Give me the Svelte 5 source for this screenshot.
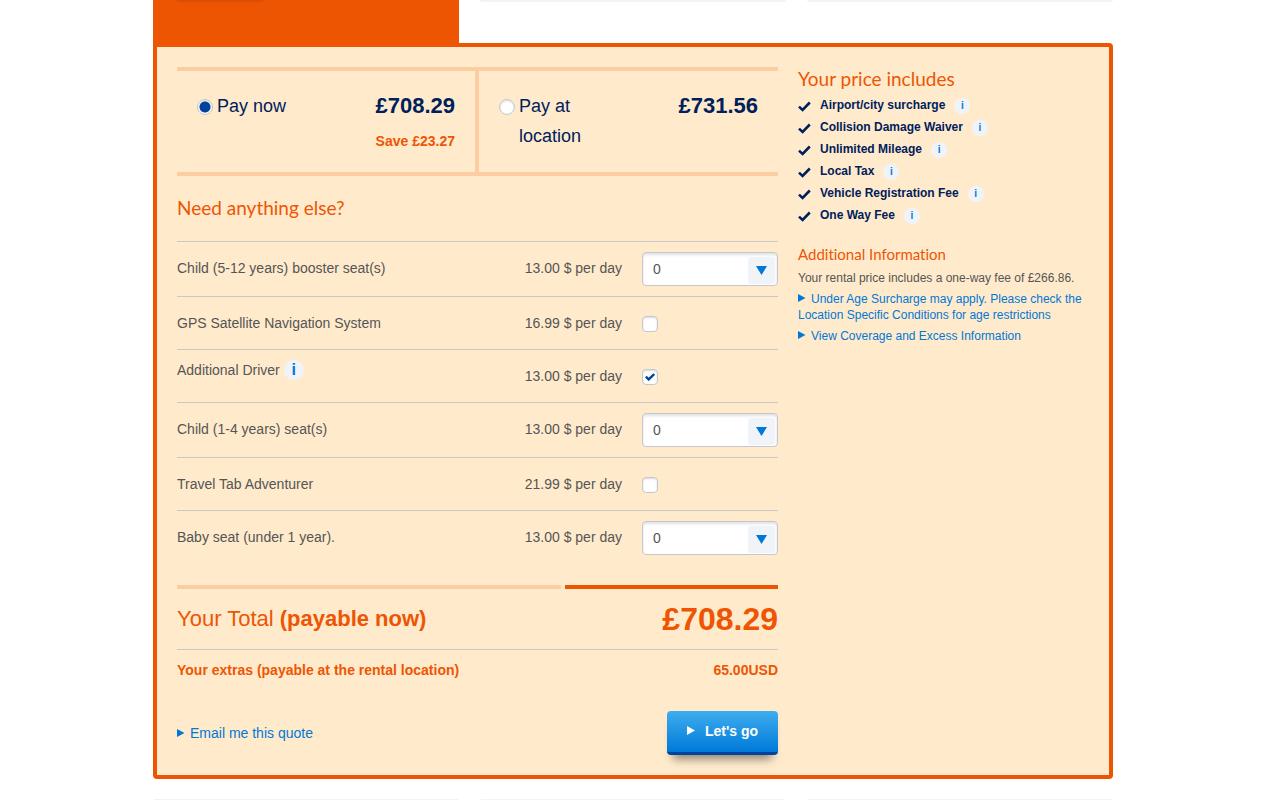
<script lang="ts">
  let payment = "now";

  let extras = [
    { id: "booster", name: "Child (5-12 years) booster seat(s)", price: "13.00", type: "count", value: 0, info: false },
    { id: "gps", name: "GPS Satellite Navigation System", price: "16.99", type: "check", value: false, info: false },
    { id: "driver", name: "Additional Driver", price: "13.00", type: "check", value: true, info: true },
    { id: "child", name: "Child (1-4 years) seat(s)", price: "13.00", type: "count", value: 0, info: false },
    { id: "tab", name: "Travel Tab Adventurer", price: "21.99", type: "check", value: false, info: false },
    { id: "baby", name: "Baby seat (under 1 year).", price: "13.00", type: "count", value: 0, info: false }
  ];

  const included = [
    "Airport/city surcharge",
    "Collision Damage Waiver",
    "Unlimited Mileage",
    "Local Tax",
    "Vehicle Registration Fee",
    "One Way Fee"
  ];
</script>

<div class="page">
  <div class="cars top">
    <div class="tab"><div class="tab-button"></div></div>
    <div class="card-end"></div>
    <div class="card-end"></div>
  </div>

  <main class="panel">
    <section class="booking">
      <div class="payments">
        <div class="payment">
          <label><input type="radio" name="payment" value="now" bind:group={payment}><span>Pay now</span></label>
          <div class="amount">
            <strong>£708.29</strong>
            <em>Save £23.27</em>
          </div>
        </div>
        <div class="payment">
          <label class="narrow"><input type="radio" name="payment" value="location" bind:group={payment}><span>Pay at location</span></label>
          <div class="amount">
            <strong>£731.56</strong>
          </div>
        </div>
      </div>

      <h2>Need anything else?</h2>
      <ul class="extras">
        {#each extras as extra}
          <li>
            <div class="name" class:with-info={extra.info}>
              <label for={extra.id}>{extra.name}</label>
              {#if extra.info}
                <button type="button" class="info large">i</button>
              {/if}
            </div>
            <span class="price">{extra.price} $ per day</span>
            <div class="control">
              {#if extra.type === "count"}
                <div class="select">
                  <select id={extra.id} bind:value={extra.value}>
                    {#each [0, 1, 2, 3, 4] as n}
                      <option value={n}>{n}</option>
                    {/each}
                  </select>
                  <span class="arrow">
                    <svg width="11" height="9" viewBox="0 0 11 9"><path d="M0 0h11L5.5 9z" /></svg>
                  </span>
                </div>
              {:else}
                <div class="check">
                  <input type="checkbox" id={extra.id} bind:checked={extra.value}>
                  {#if extra.value}
                    <svg width="10" height="8" viewBox="0 0 10 8"><path d="M.8 3.6l2.9 2.8L9.2 1" /></svg>
                  {/if}
                </div>
              {/if}
            </div>
          </li>
        {/each}
      </ul>

      <div class="bars"><span></span><span></span></div>
      <div class="total">
        <span>Your Total <b>(payable now)</b></span>
        <strong>£708.29</strong>
      </div>
      <div class="extras-total">
        <span>Your extras (payable at the rental location)</span>
        <span>65.00USD</span>
      </div>

      <div class="actions">
        <a href="#email"><svg class="tri" width="8" height="9" viewBox="0 0 8 9"><path d="M0 0l7.5 4L0 8z" /></svg>Email me this quote</a>
        <button type="button" class="go">
          <svg width="8" height="9" viewBox="0 0 8 9"><path d="M0 0l8 4.5L0 9z" /></svg>
          Let's go
        </button>
      </div>
    </section>

    <aside>
      <h2>Your price includes</h2>
      <ul class="included">
        {#each included as item}
          <li>
            <svg class="tick" width="13" height="11" viewBox="0 0 13 11"><path d="M1 5.6l3.6 3.3L11.8 1.5" /></svg>
            <span>{item}</span>
            <button type="button" class="info">i</button>
          </li>
        {/each}
      </ul>

      <h3>Additional Information</h3>
      <p>Your rental price includes a one-way fee of £266.86.</p>
      <a href="#age"><svg class="tri" width="8" height="9" viewBox="0 0 8 9"><path d="M0 0l7.5 4L0 8z" /></svg>Under Age Surcharge may apply. Please check the Location Specific Conditions for age restrictions</a>
      <a href="#coverage"><svg class="tri" width="8" height="9" viewBox="0 0 8 9"><path d="M0 0l7.5 4L0 8z" /></svg>View Coverage and Excess Information</a>
    </aside>
  </main>

  <div class="cars bottom">
    <div class="card-start"></div>
    <div class="card-start"></div>
    <div class="card-start"></div>
  </div>
</div>

<style>
  :global(body) {
    background: #fff;
  }

  .page {
    max-width: 960px;
    margin: 0 auto;
    padding: 0 14px 0 0;
    font-family: "Liberation Sans", Arial, sans-serif;
    font-size: 14px;
    color: #555;
  }

  .cars {
    display: grid;
    grid-template-columns: repeat(3, 1fr);
    gap: 21px;
  }

  .tab {
    height: 43px;
    padding: 0 24px;
    background: #ee5503;
    overflow: hidden;
  }

  .tab-button {
    width: 86px;
    height: 10px;
    margin-top: -11px;
    box-shadow: 0 0 4px rgba(0, 0, 0, 0.4);
  }

  .card-end {
    height: 2px;
    background: #f0f4f8;
    border-radius: 0 0 3px 3px;
  }

  .bottom {
    margin-top: 20px;
  }

  .card-start {
    height: 1px;
    margin: 0 1px;
    background: #f3f3f3;
  }

  .panel {
    display: flex;
    gap: 20px;
    padding: 20px;
    background: #ffebcc;
    border: 4px solid #ee5503;
    border-radius: 0 4px 4px 4px;
  }

  .booking {
    flex: 601;
  }

  aside {
    flex: 291;
    font-size: 12px;
    line-height: 16px;
  }

  h2, h3 {
    margin: 0;
    font-family: Lato, sans-serif;
    font-weight: 400;
    font-variant-ligatures: none;
    color: #ee5503;
  }

  h2 {
    font-size: 19px;
    line-height: 24px;
  }

  h3 {
    margin: 20px 0 8px;
    font-size: 15px;
    line-height: 16px;
  }

  ul {
    margin: 0;
    padding: 0;
    list-style: none;
  }

  a {
    color: #0078d7;
    text-decoration: none;
  }

  .tri {
    margin-right: 5px;
    fill: #0078d7;
  }

  .payments {
    display: grid;
    grid-template-columns: 302fr 299fr;
    border-top: 4px solid #fccda1;
    border-bottom: 4px solid #fccda1;
  }

  .payment {
    display: flex;
    justify-content: space-between;
    padding: 20px 20px 16px;
    line-height: 30px;
    color: #00205b;
  }

  .payment:first-child {
    border-right: 4px solid #fccda1;
  }

  .payment label {
    display: flex;
    align-items: flex-start;
    gap: 4px;
    font-size: 18px;
  }

  .narrow {
    width: 100px;
  }

  input {
    appearance: none;
    flex: none;
    width: 16px;
    height: 16px;
    margin: 0;
    background: #fff;
    border: 1px solid #c4c8cc;
    box-shadow: inset 0 1px 2px rgba(0, 0, 0, 0.15);
  }

  input[type="radio"] {
    margin-top: 8px;
    border-radius: 50%;
  }

  input[type="radio"]:checked {
    background: radial-gradient(circle, #00439c 5px, #fff 6px);
  }

  input[type="checkbox"] {
    border-radius: 4px;
  }

  .amount {
    text-align: right;
  }

  .amount strong {
    display: block;
    font-size: 22px;
  }

  .amount em {
    display: block;
    margin-top: 5px;
    font-style: normal;
    font-weight: bold;
    color: #ee5503;
  }

  .booking h2 {
    margin: 20px 0 21px;
  }

  .extras li {
    display: flex;
    align-items: flex-start;
    gap: 20px;
    min-height: 32px;
    padding: 10px 0;
    line-height: 32px;
    border-top: 1px solid #c8c8c8;
  }

  .name {
    display: flex;
    align-items: center;
    gap: 4px;
    flex: 1;
  }

  .with-info {
    line-height: 20px;
  }

  .control {
    width: 136px;
  }

  .select, .check {
    display: grid;
    align-items: center;
  }

  .select > *, .check > * {
    grid-area: 1 / 1;
  }

  .check {
    width: 16px;
    margin-top: 9px;
    justify-items: center;
  }

  .check svg {
    fill: none;
    stroke: #00439c;
    stroke-width: 2.4;
    pointer-events: none;
  }

  select {
    appearance: none;
    width: 100%;
    height: 34px;
    padding: 0 10px;
    font: inherit;
    color: #555;
    background: #fff;
    border: 1px solid #c4c8cc;
    border-radius: 4px;
    box-shadow: inset 0 2px 3px rgba(0, 0, 0, 0.12);
  }

  .arrow {
    display: grid;
    place-items: center;
    justify-self: end;
    width: 27px;
    height: 27px;
    margin: 2px 3px 0 0;
    background: #f0f4f8;
    border-radius: 3px;
    pointer-events: none;
  }

  .arrow svg {
    fill: #0078d7;
  }

  .info {
    width: 16px;
    height: 16px;
    padding: 0;
    border: 0;
    border-radius: 50%;
    background: #f0f4f8;
    color: #0078d7;
    font: bold 10px/16px "Liberation Sans", Arial, sans-serif;
  }

  .large {
    width: 20px;
    height: 20px;
    font-size: 16px;
    line-height: 20px;
  }

  .bars {
    display: flex;
    gap: 4px;
    margin-top: 20px;
  }

  .bars span {
    flex: 384;
    height: 4px;
    background: #fccda1;
  }

  .bars span:last-child {
    flex: 213;
    background: #ee5503;
  }

  .total, .extras-total, .actions {
    display: flex;
    justify-content: space-between;
    align-items: center;
    color: #ee5503;
  }

  .total {
    height: 60px;
    font-size: 22px;
    border-bottom: 1px solid #c8c8c8;
  }

  .total strong {
    font-size: 32px;
  }

  .extras-total {
    height: 40px;
    font-weight: bold;
  }

  .actions {
    margin-top: 21px;
  }

  .go {
    display: flex;
    align-items: center;
    gap: 10px;
    height: 44px;
    padding: 0 20px 2px;
    border: 0;
    border-bottom: 3px solid #00439c;
    border-radius: 4px;
    background: linear-gradient(#3eaef0, #0079d8);
    box-shadow: 0 10px 10px -6px rgba(0, 0, 0, 0.45);
    color: #fff;
    font: bold 14px "Liberation Sans", Arial, sans-serif;
  }

  .go svg {
    fill: #fff;
  }

  .included {
    margin-top: 3px;
    color: #00205b;
    font-weight: bold;
  }

  .included li {
    display: flex;
    align-items: center;
    height: 22px;
  }

  .included span {
    margin: 0 9px;
  }

  .included .info {
    margin-top: 2px;
  }

  .tick {
    margin-top: 3px;
    fill: none;
    stroke: #00205b;
    stroke-width: 2.6;
  }

  aside p {
    margin: 0;
  }

  aside a {
    display: block;
    margin-top: 5px;
  }
</style>
